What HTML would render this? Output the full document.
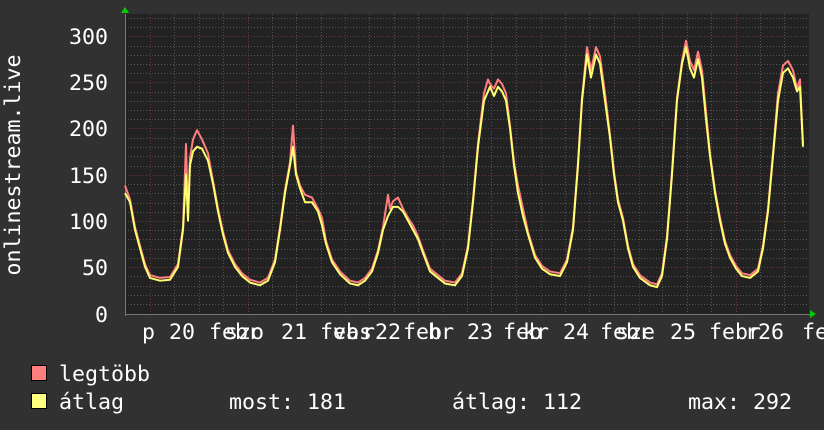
<!DOCTYPE html>
<html><head><meta charset="utf-8"><style>
body{margin:0;background:#313131;width:824px;height:430px;overflow:hidden}
svg{display:block}
text{font-family:"DejaVu Sans Mono","Liberation Mono",monospace;fill:#fff;font-size:21.6px}
</style></head><body>
<svg width="824" height="430" viewBox="0 0 824 430">
<rect x="0" y="0" width="824" height="430" fill="#313131"/>
<rect x="125" y="14" width="684" height="300" fill="#222"/>
<g stroke="#555" stroke-width="1" stroke-dasharray="1,2">
<path d="M125 304.5H809M125 295.5H809M125 286.5H809M125 276.5H809M125 258.5H809M125 249.5H809M125 239.5H809M125 230.5H809M125 212.5H809M125 203.5H809M125 193.5H809M125 184.5H809M125 166.5H809M125 156.5H809M125 147.5H809M125 138.5H809M125 119.5H809M125 110.5H809M125 101.5H809M125 92.5H809M125 73.5H809M125 64.5H809M125 55.5H809M125 46.5H809M125 27.5H809M125 18.5H809"/>
<path d="M174.5 14V314M199.5 14V314M223.5 14V314M272.5 14V314M296.5 14V314M321.5 14V314M369.5 14V314M394.5 14V314M418.5 14V314M467.5 14V314M491.5 14V314M516.5 14V314M565.5 14V314M589.5 14V314M614.5 14V314M662.5 14V314M687.5 14V314M711.5 14V314M760.5 14V314M784.5 14V314"/>
</g>
<g stroke="#6a3a3a" stroke-width="1" stroke-dasharray="1,2">
<path d="M125 267.5H809M125 221.5H809M125 175.5H809M125 128.5H809M125 82.5H809M125 36.5H809"/>
<path d="M150.5 14V318M248.5 14V318M345.5 14V318M443.5 14V318M541.5 14V318M639.5 14V318M736.5 14V318"/>
</g>
<path d="M125 314.5H813M125.5 14V316" stroke="#777" stroke-width="1"/>
<polygon points="121,13 125,7 129,13" fill="#0c0"/>
<polygon points="810,310 816,314 810,318" fill="#0c0"/>
<g transform="translate(0,313) scale(1,-0.9233)" fill="none" stroke-linejoin="round">
<polyline stroke="#ff7f7f" stroke-width="2" vector-effect="non-scaling-stroke" transform="translate(0,3)" points="125,135 130,120 135,90 140,70 145,50 150,38 160,35 170,36 178,50 183,90 186,180 188,100 190,165 193,185 197,195 202,185 208,170 213,140 218,110 223,85 228,65 235,50 242,40 250,33 260,30 268,35 275,55 280,90 285,130 290,160 293,200 296,150 300,135 305,125 312,122 318,110 322,100 326,75 332,55 340,42 350,32 358,30 365,35 372,45 378,65 383,90 388,125 390,110 393,118 398,122 403,110 408,100 413,92 418,80 423,65 430,45 438,38 445,32 455,30 462,40 468,70 473,120 478,180 484,235 488,250 490,245 494,240 498,250 502,245 506,235 510,200 514,160 518,135 523,110 528,85 535,60 542,48 550,42 560,40 567,55 573,90 578,160 582,230 587,285 591,260 596,285 600,275 605,235 610,190 614,150 618,120 623,100 628,70 633,50 640,38 650,30 657,28 662,40 667,80 672,150 677,230 682,270 686,292 690,270 694,260 698,280 702,260 706,215 710,170 715,130 720,100 725,75 730,60 736,48 742,40 750,38 758,45 763,70 768,110 773,170 778,235 783,265 788,270 793,260 797,240 800,250 803,180"/>
<polyline stroke="#ffff70" stroke-width="2" vector-effect="non-scaling-stroke" points="125,130 130,120 135,90 140,70 145,50 150,38 160,35 170,36 178,50 183,90 186,150 188,100 190,160 193,175 197,180 202,178 208,165 213,140 218,110 223,85 228,65 235,50 242,40 250,33 260,30 268,35 275,55 280,90 285,130 290,160 293,180 296,150 300,135 305,120 312,120 318,110 322,95 326,75 332,55 340,42 350,32 358,30 365,35 372,45 378,65 383,90 388,105 393,115 398,115 403,110 408,100 413,90 418,80 423,65 430,45 438,38 445,32 455,30 462,40 468,70 473,120 478,180 484,230 490,245 494,235 498,245 502,240 506,230 510,200 514,160 518,130 523,105 528,85 535,60 542,48 550,42 560,40 567,55 573,90 578,160 582,230 587,280 591,255 596,280 600,270 605,230 610,190 614,150 618,120 623,100 628,70 633,50 640,38 650,30 657,28 662,40 667,80 672,150 677,230 682,270 686,288 690,265 694,255 698,275 702,255 706,210 710,170 715,130 720,100 725,75 730,60 736,48 742,40 750,38 758,45 763,70 768,110 773,170 778,230 783,260 788,265 793,255 797,240 800,245 803,180"/>
</g>
<g text-anchor="end">
<text x="108" y="44">300</text><text x="108" y="90">250</text><text x="108" y="136">200</text>
<text x="108" y="183">150</text><text x="108" y="229">100</text><text x="108" y="275">50</text><text x="108" y="322">0</text>
</g>
<text transform="translate(20,165) rotate(-90)" text-anchor="middle">onlinestream.live</text>
<g>
<text x="142" y="339">p</text><text x="169" y="339">20</text><text x="209" y="339">febr</text><text x="225" y="339">szo</text>
<text x="281" y="339">21</text><text x="320" y="339">feb</text><text x="333" y="339">vas</text><text x="362" y="339">r22</text>
<text x="403" y="339">feb</text><text x="428" y="339">hr</text><text x="467" y="339">23</text><text x="503" y="339">feb</text><text x="523" y="339">kr</text>
<text x="563" y="339">24</text><text x="600" y="339">febr</text><text x="616" y="339">sze</text>
<text x="670" y="339">25</text><text x="709" y="339">febr</text><text x="745" y="339">r26</text><text x="802" y="339">fe</text>
</g>
<rect x="31.5" y="365.5" width="15" height="15" fill="#ff7f7f" stroke="#000"/>
<rect x="31.5" y="393.5" width="15" height="15" fill="#ffff7f" stroke="#000"/>
<text x="59" y="381">legtöbb</text>
<text x="59" y="409">átlag</text>
<text x="229" y="409">most: 181</text>
<text x="452" y="409">átlag: 112</text>
<text x="688" y="409">max: 292</text>
</svg>
</body></html>
